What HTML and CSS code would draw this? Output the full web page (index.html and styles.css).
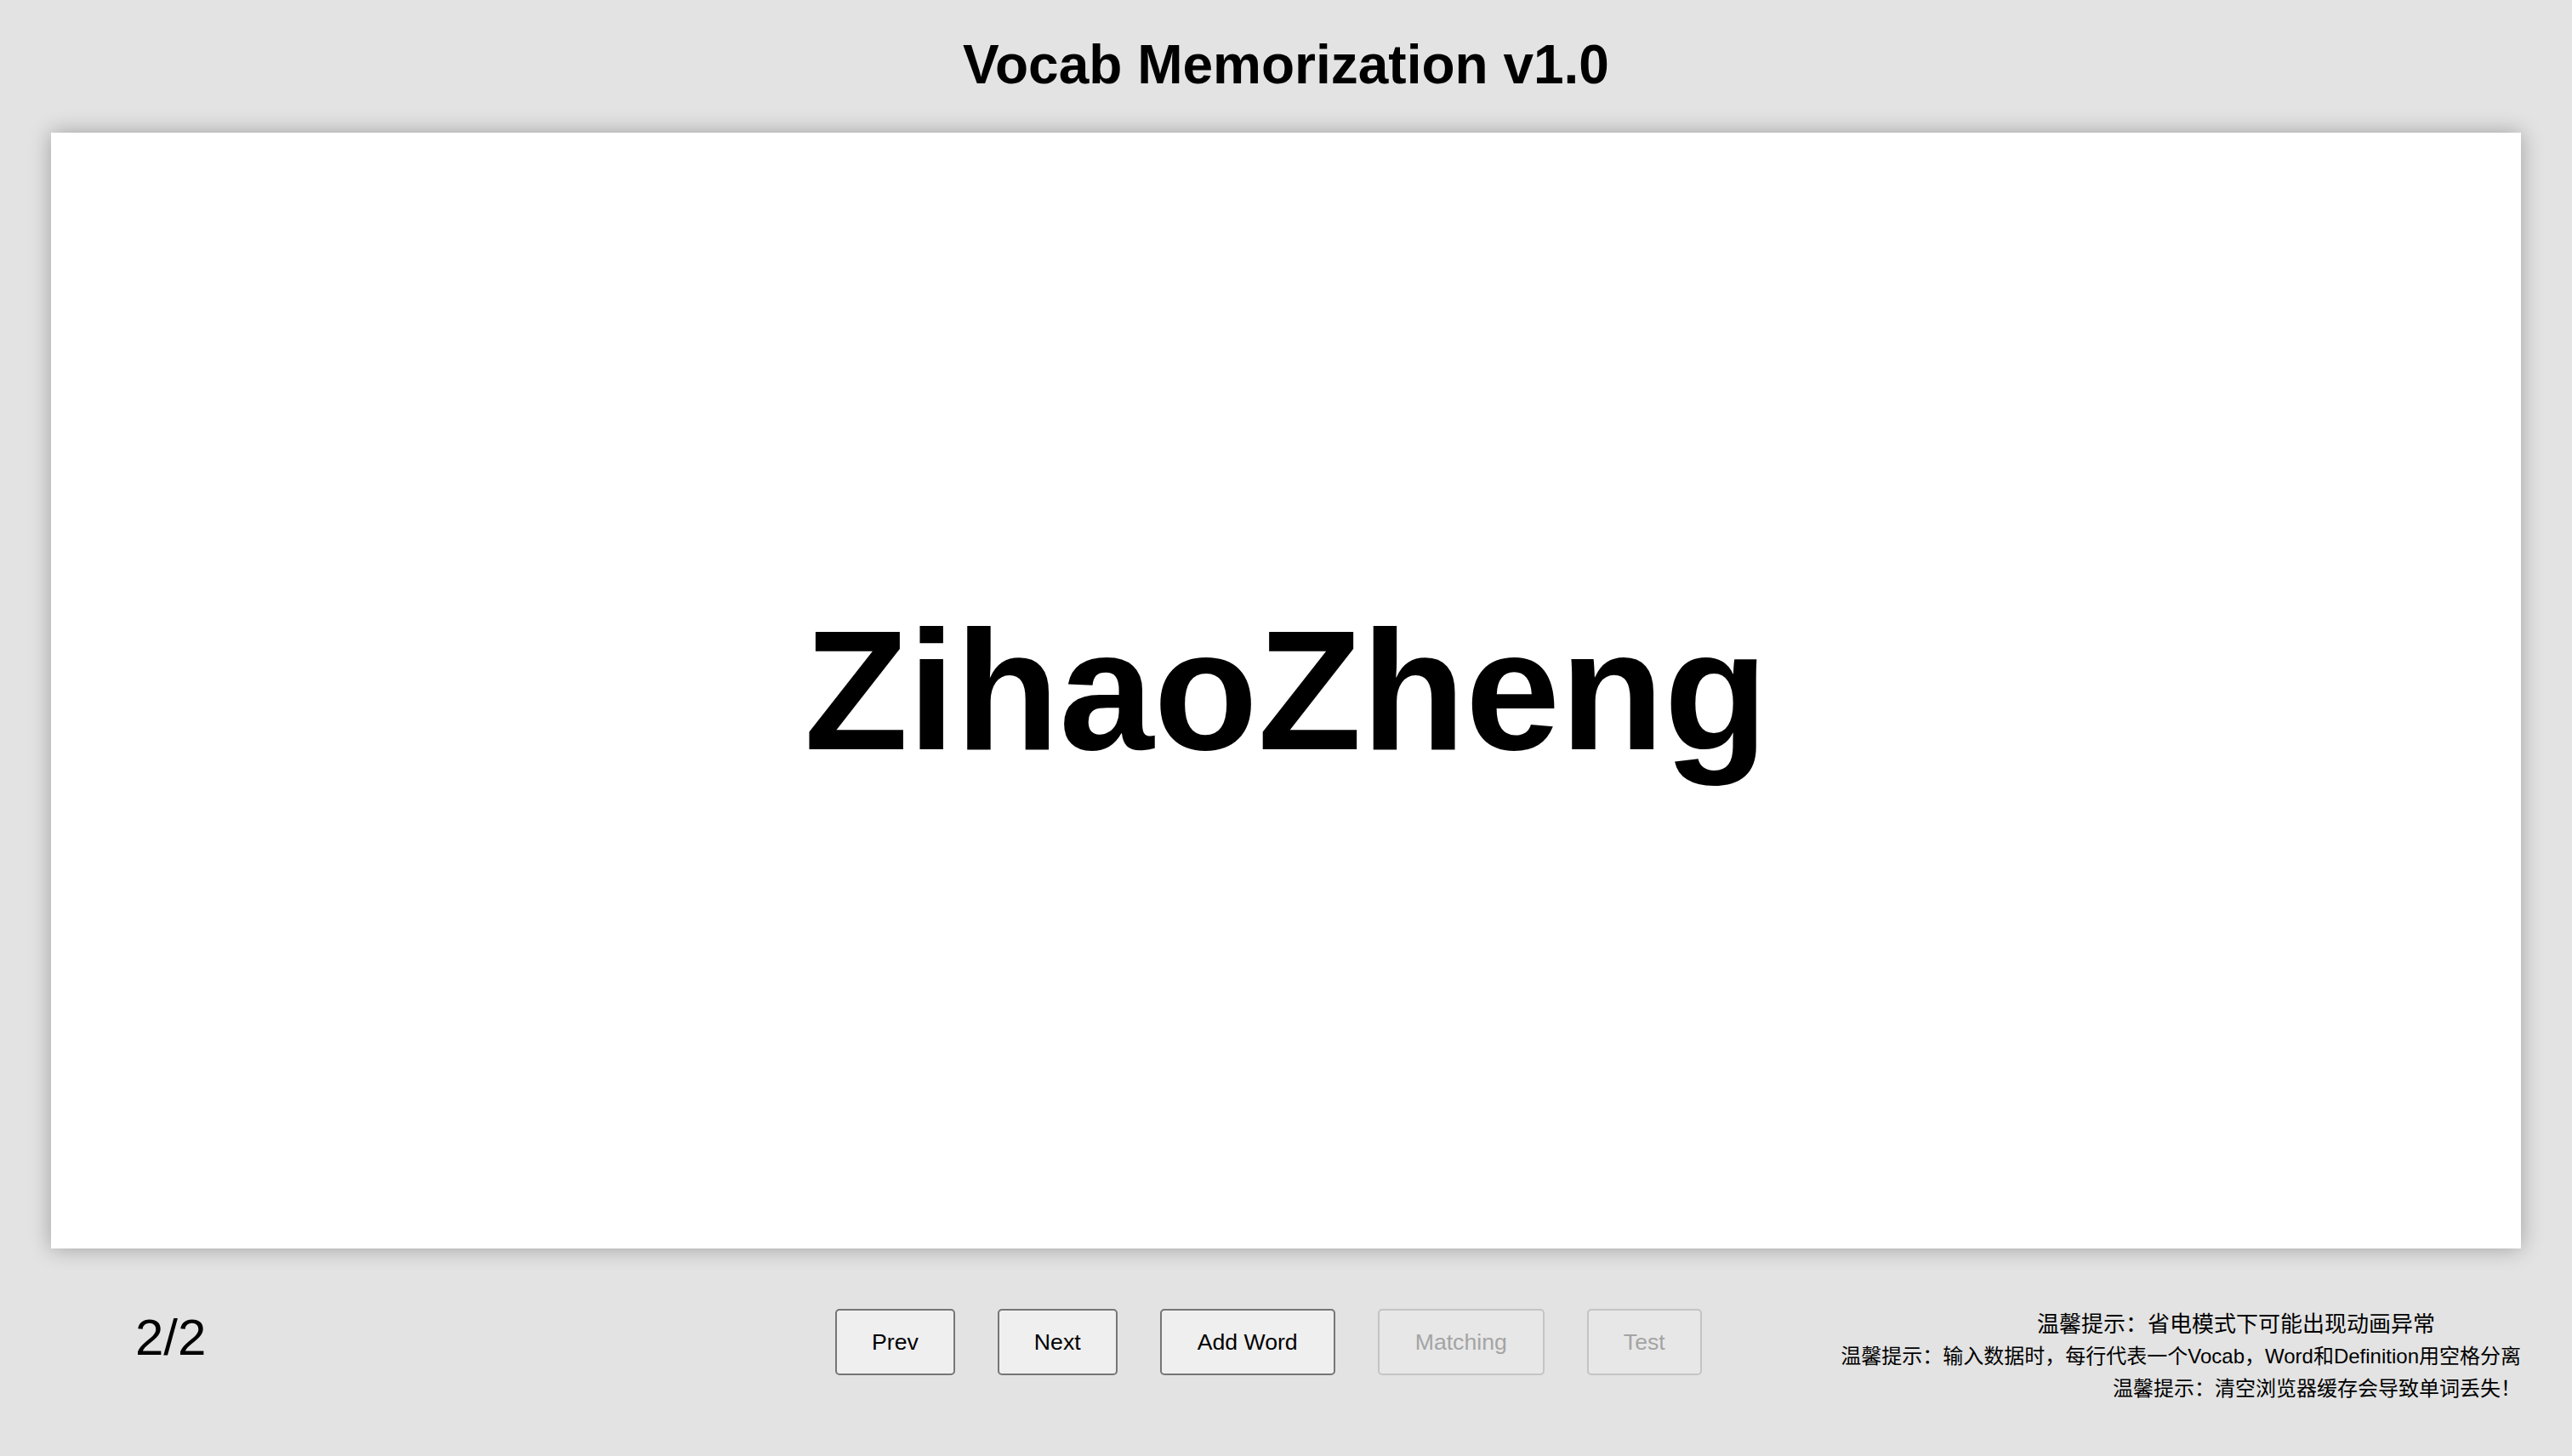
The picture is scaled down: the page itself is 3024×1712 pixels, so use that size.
FILE: index.html
```html
<!DOCTYPE html>
<html lang="zh-CN">
<head>
<meta charset="utf-8">
<title>Vocab Memorization v1.0</title>
<link rel="stylesheet" href="styles.css">
</head>
<body>
<h1 class="title">Vocab Memorization v1.0</h1>
<main class="card">
  <div class="word">ZihaoZheng</div>
</main>
<footer class="bar">
  <div class="counter">2/2</div>
  <div class="buttons">
    <button class="btn">Prev</button>
    <button class="btn">Next</button>
    <button class="btn btn-wide">Add Word</button>
    <button class="btn btn-wide" disabled>Matching</button>
    <button class="btn" disabled>Test</button>
  </div>
  <div class="tips">
    <p class="tip tip-first">温馨提示：省电模式下可能出现动画异常</p>
    <p class="tip">温馨提示：输入数据时，每行代表一个Vocab，Word和Definition用空格分离</p>
    <p class="tip">温馨提示：清空浏览器缓存会导致单词丢失！</p>
  </div>
</footer>
</body>
</html>
```

FILE: styles.css
```css
html, body {
  margin: 0;
  padding: 0;
}

body {
  background: #e3e3e3;
  font-family: "Liberation Sans", "Noto Sans CJK SC", Arial, sans-serif;
  color: #000;
  width: 3024px;
  height: 1712px;
  overflow: hidden;
}

.title {
  margin: 0;
  padding-top: 39px;
  font-size: 64px;
  line-height: 74px;
  font-weight: bold;
  text-align: center;
}

.card {
  width: 2904px;
  height: 1312px;
  margin: 43px auto 0;
  background: #fff;
  box-shadow: 0 0 24px rgba(0, 0, 0, 0.3);
  display: flex;
  align-items: center;
  justify-content: center;
}

.word {
  font-size: 200px;
  font-weight: bold;
  line-height: 230px;
}

.bar {
  width: 2904px;
  margin: 0 auto;
  padding-top: 70px;
  display: flex;
  align-items: flex-start;
}

.counter {
  width: 823px;
  padding-left: 99px;
  font-size: 60px;
  line-height: 69px;
}

.buttons {
  display: flex;
  gap: 50px;
  margin-top: 1px;
}

.btn {
  height: 78px;
  padding: 0 41px;
  border: 2px solid #767676;
  border-radius: 5px;
  background: #efefef;
  color: #000;
  font-family: "Liberation Sans", Arial, sans-serif;
  font-size: 26.67px;
  line-height: 30px;
}

.btn-wide {
  padding: 0 42px;
}

.btn:disabled {
  border-color: #c4c4c4;
  background: #e7e7e7;
  color: #a4a4a4;
}

.tips {
  margin-left: auto;
  display: flex;
  flex-direction: column;
  align-items: flex-end;
}

.tip {
  margin: 0;
  font-size: 24px;
  line-height: 38px;
  white-space: nowrap;
}

.tip-first {
  font-size: 26px;
  margin-right: 101px;
}
```
